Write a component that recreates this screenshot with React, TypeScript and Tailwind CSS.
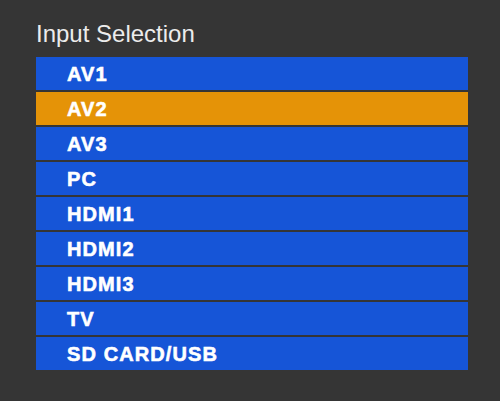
import React from "react";

const items = ["AV1", "AV2", "AV3", "PC", "HDMI1", "HDMI2", "HDMI3", "TV", "SD CARD/USB"];

export default function App() {
  return (
    <div className="w-[500px] h-[401px] bg-[#353535] pl-[36px] pr-[32px] pt-[20px]" style={{ fontFamily: '"Liberation Sans", Arial, sans-serif' }}>
      <div className="text-[24px] leading-[28px] text-[#ececec] h-[37px]">Input Selection</div>
      <div className="flex flex-col gap-[2px]">
        {items.map((it, i) => (
          <div
            key={it}
            className={`h-[33px] flex items-center pl-[31px] text-white font-bold text-[20px] tracking-[1.1px] [-webkit-text-stroke:0.6px_white] ${i === 1 ? "bg-[#e59307]" : "bg-[#1655d7]"}`}
          >
            {it}
          </div>
        ))}
      </div>
    </div>
  );
}
